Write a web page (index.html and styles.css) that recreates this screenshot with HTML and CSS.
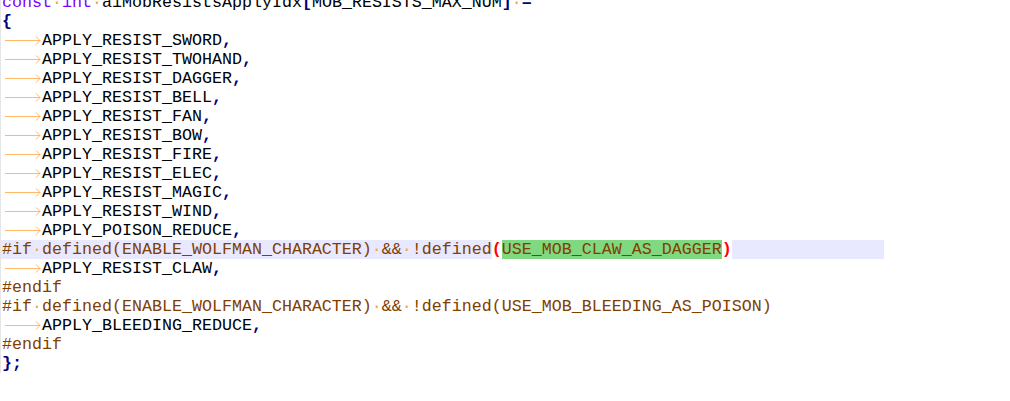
FILE: index.html
```html
<!DOCTYPE html>
<html>
<head>
<meta charset="utf-8">
<link rel="stylesheet" href="styles.css">
</head>
<body>
<div class="editor">
  <div class="code">
    <div class="line"><span class="kw">const</span><span class="ws">·</span><span class="kw">int</span><span class="ws">·</span>aiMobResistsApplyIdx<span class="op">[</span>MOB_RESISTS_MAX_NUM<span class="op">]</span><span class="ws">·</span><span class="op">=</span></div>
    <div class="line"><span class="op">{</span></div>
    <div class="line"><span class="tab"><svg viewBox="0 0 40 19" width="40" height="19"><path d="M3 9.5H38M34 5.5L38 9.5L34 13.5"/></svg></span>APPLY_RESIST_SWORD<span class="op">,</span></div>
    <div class="line"><span class="tab"><svg viewBox="0 0 40 19" width="40" height="19"><path d="M3 9.5H38M34 5.5L38 9.5L34 13.5"/></svg></span>APPLY_RESIST_TWOHAND<span class="op">,</span></div>
    <div class="line"><span class="tab"><svg viewBox="0 0 40 19" width="40" height="19"><path d="M3 9.5H38M34 5.5L38 9.5L34 13.5"/></svg></span>APPLY_RESIST_DAGGER<span class="op">,</span></div>
    <div class="line"><span class="tab"><svg viewBox="0 0 40 19" width="40" height="19"><path d="M3 9.5H38M34 5.5L38 9.5L34 13.5"/></svg></span>APPLY_RESIST_BELL<span class="op">,</span></div>
    <div class="line"><span class="tab"><svg viewBox="0 0 40 19" width="40" height="19"><path d="M3 9.5H38M34 5.5L38 9.5L34 13.5"/></svg></span>APPLY_RESIST_FAN<span class="op">,</span></div>
    <div class="line"><span class="tab"><svg viewBox="0 0 40 19" width="40" height="19"><path d="M3 9.5H38M34 5.5L38 9.5L34 13.5"/></svg></span>APPLY_RESIST_BOW<span class="op">,</span></div>
    <div class="line"><span class="tab"><svg viewBox="0 0 40 19" width="40" height="19"><path d="M3 9.5H38M34 5.5L38 9.5L34 13.5"/></svg></span>APPLY_RESIST_FIRE<span class="op">,</span></div>
    <div class="line"><span class="tab"><svg viewBox="0 0 40 19" width="40" height="19"><path d="M3 9.5H38M34 5.5L38 9.5L34 13.5"/></svg></span>APPLY_RESIST_ELEC<span class="op">,</span></div>
    <div class="line"><span class="tab"><svg viewBox="0 0 40 19" width="40" height="19"><path d="M3 9.5H38M34 5.5L38 9.5L34 13.5"/></svg></span>APPLY_RESIST_MAGIC<span class="op">,</span></div>
    <div class="line"><span class="tab"><svg viewBox="0 0 40 19" width="40" height="19"><path d="M3 9.5H38M34 5.5L38 9.5L34 13.5"/></svg></span>APPLY_RESIST_WIND<span class="op">,</span></div>
    <div class="line"><span class="tab"><svg viewBox="0 0 40 19" width="40" height="19"><path d="M3 9.5H38M34 5.5L38 9.5L34 13.5"/></svg></span>APPLY_POISON_REDUCE<span class="op">,</span></div>
    <div class="line current"><span class="pp">#if<span class="ws">·</span>defined(ENABLE_WOLFMAN_CHARACTER)<span class="ws">·</span>&amp;&amp;<span class="ws">·</span>!defined<span class="brace">(</span><span class="mark">USE_MOB_CLAW_AS_DAGGER</span><span class="brace">)</span></span></div>
    <div class="line"><span class="tab"><svg viewBox="0 0 40 19" width="40" height="19"><path d="M3 9.5H38M34 5.5L38 9.5L34 13.5"/></svg></span>APPLY_RESIST_CLAW<span class="op">,</span></div>
    <div class="line"><span class="pp">#endif</span></div>
    <div class="line"><span class="pp">#if<span class="ws">·</span>defined(ENABLE_WOLFMAN_CHARACTER)<span class="ws">·</span>&amp;&amp;<span class="ws">·</span>!defined(USE_MOB_BLEEDING_AS_POISON)</span></div>
    <div class="line"><span class="tab"><svg viewBox="0 0 40 19" width="40" height="19"><path d="M3 9.5H38M34 5.5L38 9.5L34 13.5"/></svg></span>APPLY_BLEEDING_REDUCE<span class="op">,</span></div>
    <div class="line"><span class="pp">#endif</span></div>
    <div class="line"><span class="op">};</span></div>
  </div>
</div>
</body>
</html>
```

FILE: styles.css
```css
html, body {
  margin: 0;
  padding: 0;
  background: #ffffff;
  overflow: hidden;
}

.editor {
  width: 1010px;
  height: 401px;
  overflow: hidden;
  background: #ffffff;
}

.code {
  width: 883px;
  margin-top: -7px;
  border-left: 1px solid #e6e6e6;
  font-family: "Liberation Mono", "Courier New", monospace;
  font-size: 16.667px;
  color: #000000;
}

.line {
  height: 19px;
  line-height: 19px;
  white-space: pre;
  padding-left: 1px;
}

.line.current {
  background: #e8e8ff;
}

.kw {
  color: #8000ff;
}

.op {
  color: #000080;
  font-weight: bold;
}

.pp {
  color: #804000;
}

.ws {
  color: #ffa040;
}

.tab {
  display: inline-block;
  width: 40px;
  height: 19px;
  vertical-align: top;
}

.tab svg {
  display: block;
}

.tab path {
  fill: none;
  stroke: #ffb868;
  stroke-width: 1;
}

.mark {
  background: #80d880;
  display: inline-block;
  height: 19px;
  vertical-align: top;
}

.brace {
  color: #ff0000;
  font-weight: bold;
  background: #ffffff;
  display: inline-block;
  height: 19px;
  vertical-align: top;
}
```
